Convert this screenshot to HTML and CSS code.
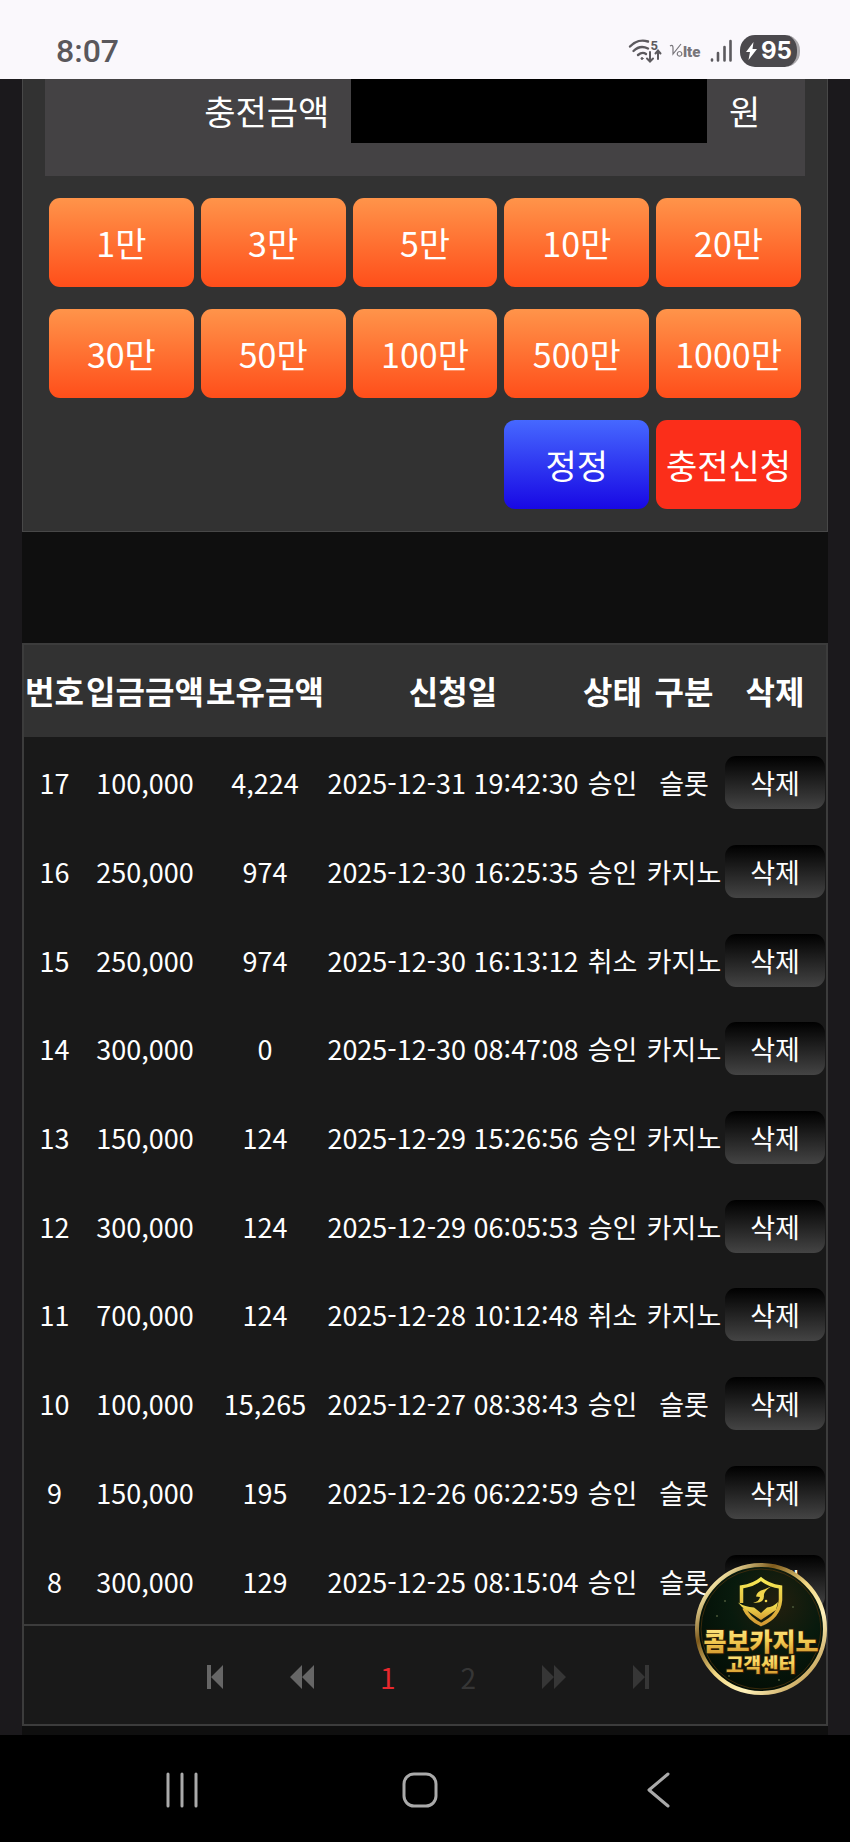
FILE: index.html
```html
<!DOCTYPE html>
<html lang="ko">
<head>
<meta charset="utf-8">
<meta name="viewport" content="width=device-width, initial-scale=1">
<title>충전신청</title>
<link rel="stylesheet" href="styles.css">
</head>
<body>
<header class="status">
  <span class="clock">8:07</span>
  <div class="status-icons">
    <svg width="34" height="26" viewBox="0 0 34 26" fill="none" stroke="#5c5a5e" stroke-width="2.4" stroke-linecap="round">
      <path d="M2 8.500C7 3 14 1.500 20 3.500M5.500 13C10 8.500 15 8 20 10.500M10 17C13 14.500 16 14.500 18 16"/>
      <circle cx="14" cy="20.500" r="1" fill="#5c5a5e" stroke-width="1"/>
      <path d="M22 14v9M19 20.500l3 3 3-3M30 21v-8M27.500 15.500l2.500-3 2.500 3" stroke-width="2"/>
      <text class="wifi-gen" x="22.500" y="12">5</text>
    </svg>
    <svg width="34" height="20" viewBox="0 0 34 20">
      <path d="M1 5q3-2 3 2v6L12 3M10.500 10.500a2.300 2.300 0 1 0 .1 0" fill="none" stroke="#77757a" stroke-width="1.200"/>
      <text class="lte" x="14" y="16">lte</text>
    </svg>
    <svg width="23" height="24" viewBox="0 0 23 24" stroke="#5c5a5e" stroke-width="2.600" stroke-linecap="round"><path d="M2 20.500v1M8 14v7.500M14.500 8v13.500M20.500 2v19.500"/></svg>
    <span class="battery">
      <svg width="13" height="18" viewBox="0 0 13 18" fill="#fff"><path d="M8.500 0L1 10h4L3.500 18 12 7H7.500z"/></svg>95
    </span>
  </div>
</header>

<main class="page">
  <form class="panel">
    <div class="field">
      <label for="amount">충전금액</label>
      <input id="amount" type="text">
      <span>원</span>
    </div>
    <div class="amounts">
      <button type="button" class="btn">1만</button>
      <button type="button" class="btn">3만</button>
      <button type="button" class="btn">5만</button>
      <button type="button" class="btn">10만</button>
      <button type="button" class="btn">20만</button>
      <button type="button" class="btn">30만</button>
      <button type="button" class="btn">50만</button>
      <button type="button" class="btn">100만</button>
      <button type="button" class="btn">500만</button>
      <button type="button" class="btn">1000만</button>
      <button type="reset" class="btn btn-reset">정정</button>
      <button type="submit" class="btn btn-submit">충전신청</button>
    </div>
  </form>

  <section class="history">
    <table class="list">
      <colgroup><col class="c-no"><col class="c-sum"><col class="c-sum"><col class="c-date"><col class="c-state"><col class="c-kind"><col class="c-del"></colgroup>
      <thead>
        <tr><th>번호</th><th>입금금액</th><th>보유금액</th><th>신청일</th><th>상태</th><th>구분</th><th>삭제</th></tr>
      </thead>
      <tbody>
        <tr><td>17</td><td>100,000</td><td>4,224</td><td>2025-12-31 19:42:30</td><td>승인</td><td>슬롯</td><td><button class="del">삭제</button></td></tr>
        <tr><td>16</td><td>250,000</td><td>974</td><td>2025-12-30 16:25:35</td><td>승인</td><td>카지노</td><td><button class="del">삭제</button></td></tr>
        <tr><td>15</td><td>250,000</td><td>974</td><td>2025-12-30 16:13:12</td><td>취소</td><td>카지노</td><td><button class="del">삭제</button></td></tr>
        <tr><td>14</td><td>300,000</td><td>0</td><td>2025-12-30 08:47:08</td><td>승인</td><td>카지노</td><td><button class="del">삭제</button></td></tr>
        <tr><td>13</td><td>150,000</td><td>124</td><td>2025-12-29 15:26:56</td><td>승인</td><td>카지노</td><td><button class="del">삭제</button></td></tr>
        <tr><td>12</td><td>300,000</td><td>124</td><td>2025-12-29 06:05:53</td><td>승인</td><td>카지노</td><td><button class="del">삭제</button></td></tr>
        <tr><td>11</td><td>700,000</td><td>124</td><td>2025-12-28 10:12:48</td><td>취소</td><td>카지노</td><td><button class="del">삭제</button></td></tr>
        <tr><td>10</td><td>100,000</td><td>15,265</td><td>2025-12-27 08:38:43</td><td>승인</td><td>슬롯</td><td><button class="del">삭제</button></td></tr>
        <tr><td>9</td><td>150,000</td><td>195</td><td>2025-12-26 06:22:59</td><td>승인</td><td>슬롯</td><td><button class="del">삭제</button></td></tr>
        <tr><td>8</td><td>300,000</td><td>129</td><td>2025-12-25 08:15:04</td><td>승인</td><td>슬롯</td><td><button class="del">삭제</button></td></tr>
      </tbody>
    </table>
    <nav class="pager" aria-label="페이지">
      <a href="#" aria-label="처음"><svg width="18" height="26" viewBox="0 0 18 26"><path d="M1 1h4v24H1zM17 1v24L5 13z"/></svg></a>
      <a href="#" aria-label="이전"><svg width="26" height="26" viewBox="0 0 26 26"><path d="M13 1v24L1 13zM25 1v24L13 13z"/></svg></a>
      <a href="#" class="current" aria-current="page">1</a>
      <a href="#" class="dim">2</a>
      <a href="#" class="dim" aria-label="다음"><svg width="26" height="26" viewBox="0 0 26 26"><path d="M1 1v24l12-12zM13 1v24l12-12z"/></svg></a>
      <a href="#" class="dim" aria-label="마지막"><svg width="18" height="26" viewBox="0 0 18 26"><path d="M1 1v24l12-12zM13 1h4v24h-4z"/></svg></a>
    </nav>
    <a class="support" href="#" aria-label="콤보카지노 고객센터">
      <svg width="132" height="132" viewBox="0 0 132 132">
        <defs>
          <linearGradient id="gold" x1="0" y1="0" x2="0" y2="1"><stop offset="0" stop-color="#fff19a"/><stop offset=".5" stop-color="#f6cf55"/><stop offset="1" stop-color="#c98a25"/></linearGradient>
          <linearGradient id="ring" x1="0" y1="0" x2="1" y2="1"><stop offset="0" stop-color="#8a6420"/><stop offset=".12" stop-color="#fff0b0"/><stop offset=".3" stop-color="#7d5a1c"/><stop offset=".5" stop-color="#f3d984"/><stop offset=".68" stop-color="#fff2bb"/><stop offset="1" stop-color="#a87a25"/></linearGradient>
          <linearGradient id="shield" x1="0" y1="0" x2="0" y2="1"><stop offset="0" stop-color="#f7ea55"/><stop offset="1" stop-color="#d49a32"/></linearGradient>
          <radialGradient id="night" cx=".62" cy=".3" r=".8"><stop offset="0" stop-color="#231f0e"/><stop offset=".45" stop-color="#081a0d"/><stop offset="1" stop-color="#020b04"/></radialGradient>
        </defs>
        <circle cx="66" cy="66" r="64" fill="url(#night)" stroke="url(#ring)" stroke-width="4"/>
        <circle cx="66" cy="66" r="60" fill="none" stroke="#3b2a0c" stroke-width="1"/>
        <g fill="none" stroke="url(#shield)" stroke-width="3.500">
          <path d="M46.500 40V24Q59 22 66 16Q73 22 85.500 24V37Q84 54 66 61.500Q54 56 49 45"/>
        </g>
        <path d="M43 39.500Q50 44 59 44.500L66 50L72 44.500Q78 44 83 39L81 47L66 57L52 47.500Q46 44 43 39.500z" fill="url(#shield)"/>
        <path d="M58 39.500Q64 39 65 34L61 33.500Q62 28 69 26.500L76 23.500Q68 29 69 33Q69 41 58 39.500z" fill="#f1d64c"/>
        <circle cx="71" cy="38" r="1.300" fill="#f1d64c"/>
        <g fill="#4a5738"><circle cx="30" cy="38" r="1"/><circle cx="22" cy="53" r="1"/><circle cx="98" cy="44" r="1"/><circle cx="34" cy="113" r="1"/><circle cx="84" cy="117" r="1"/></g>
        <text class="badge-title" x="66" y="88">콤보카지노</text>
        <text class="badge-sub" x="66" y="109">고객센터</text>
      </svg>
    </a>
  </section>
</main>

<footer class="navbar">
  <button aria-label="최근 앱"><svg width="36" height="36" viewBox="0 0 36 36"><path d="M4 2v32M18 2v32M32 2v32"/></svg></button>
  <button aria-label="홈"><svg width="36" height="36" viewBox="0 0 36 36"><rect x="2" y="2" width="32" height="32" rx="10"/></svg></button>
  <button aria-label="뒤로"><svg width="36" height="36" viewBox="0 0 36 36"><path d="M28 2L9 18l19 16"/></svg></button>
</footer>
</body>
</html>
```
FILE: styles.css
```css
* { box-sizing: border-box; }

body {
  margin: 0;
  min-height: 100vh;
  display: flex;
  flex-direction: column;
  background: #1b191c;
  color: #fff;
  font-family: "Noto Sans CJK KR", sans-serif;
}

button, input { font: inherit; color: inherit; border: 0; }
button { padding: 0; cursor: pointer; }
a { color: inherit; text-decoration: none; }
svg { display: block; }

.status {
  height: 79px;
  padding: 22px 50px 0 56px;
  display: flex;
  justify-content: space-between;
  align-items: center;
  background: #faf8fc;
  color: #5a585c;
  font-family: Roboto, sans-serif;
}
.clock { font-size: 32px; font-weight: 500; line-height: 32px; }
.status-icons { display: flex; align-items: center; gap: 7px; }
.wifi-gen { font: 700 13px Roboto, sans-serif; fill: #5c5a5e; stroke: none; }
.lte { font: 900 15px Roboto, sans-serif; fill: #77757a; }
.battery {
  width: 60px;
  height: 32px;
  display: flex;
  align-items: center;
  justify-content: center;
  gap: 3px;
  border-radius: 15px;
  border-right: 3px solid #aaa8ac;
  background: #4b494d;
  color: #fff;
  font-family: Inter, sans-serif;
  font-size: 24px;
  font-weight: 700;
}

.page {
  flex: 1;
  margin: 0 22px;
  background: #0f0f0f;
}
.panel {
  padding: 0 22px 22px;
  border: 1px solid #484848;
  border-top: 0;
  background: #323232;
}
.field {
  display: grid;
  grid-template-columns: 284fr 355fr 76fr;
  column-gap: 22px;
  align-items: center;
  padding-bottom: 33px;
  background: #444244;
  font-size: 34px;
  line-height: 64px;
}
.field label { text-align: right; }
.field input { width: 100%; height: 64px; background: #000; border-radius: 0; }
.amounts {
  display: grid;
  grid-template-columns: repeat(5, 1fr);
  gap: 22px 7px;
  padding: 22px 4px 0;
}
.btn {
  height: 89px;
  border-radius: 11px;
  background: linear-gradient(#ff944a, #ff4e1a);
  font-size: 34px;
  white-space: nowrap;
}
.btn-reset { grid-column: 4; background: linear-gradient(#4668ff, #1808e4); }
.btn-submit { background: #fb2e1a; }

.history {
  position: relative;
  margin-top: 111px;
}
.list {
  width: 100%;
  height: 981px;
  table-layout: fixed;
  border-collapse: separate;
  border-spacing: 0;
  border: 2px solid #3c3c3c;
  border-bottom: 0;
  background: #191919;
  font-size: 27px;
  white-space: nowrap;
}
.list th, .list td { padding: 0; text-align: center; vertical-align: middle; }
.list td { padding-top: 3px; }
.list th { height: 92px; padding-bottom: 2px; background: #323232; font-size: 32px; font-weight: 700; }
.c-no { width: 61px; }
.c-sum { width: 15%; }
.c-date { width: 32%; }
.c-state { width: 63px; }
.c-kind { width: 80px; }
.c-del { width: 102px; }
.del {
  width: 100px;
  height: 53px;
  border-radius: 11px;
  background: linear-gradient(#000, #444);
  vertical-align: middle;
}

.pager {
  display: flex;
  justify-content: center;
  align-items: center;
  gap: 65px;
  height: 102px;
  padding: 4px 0 0 6px;
  border: 2px solid #3c3c3c;
  background: #191919;
  color: #666;
  font-size: 28px;
}
.pager svg { fill: currentColor; }
.pager .current { color: #e8282e; }
.pager .dim { color: #363636; }

.support {
  position: absolute;
  right: 1px;
  bottom: 31px;
}
.badge-title, .badge-sub {
  font-family: "Noto Sans CJK KR", sans-serif;
  font-weight: 900;
  text-anchor: middle;
  fill: url(#gold);
  stroke: #2a1c06;
  stroke-width: 2px;
  paint-order: stroke;
}
.badge-title { font-size: 25px; }
.badge-sub { font-size: 19px; }

.navbar {
  height: 107px;
  padding: 2px 73px 0 63px;
  display: grid;
  grid-template-columns: repeat(3, 1fr);
  align-items: center;
  justify-items: center;
  background: #000;
}
.navbar button { padding: 4px; background: none; }
.navbar svg { fill: none; stroke: #aaa; stroke-width: 3; stroke-linecap: round; stroke-linejoin: round; }
```
